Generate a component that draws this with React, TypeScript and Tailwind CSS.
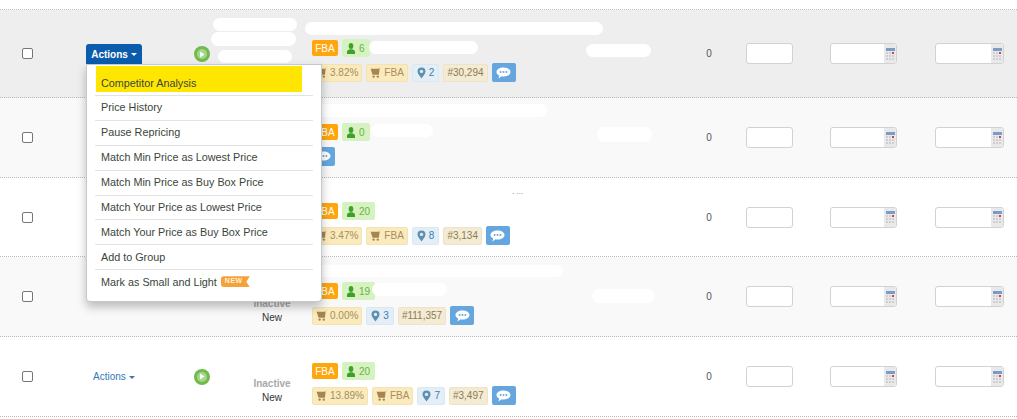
import React from "react";

const Cart = () => (
  <svg width="12" height="11" viewBox="0 0 12 11" className="shrink-0" aria-hidden="true">
    <path d="M11.8 0.3 L9.7 0.9 L8.9 7.8 L2.6 7.8 L0.6 1.8 L8.5 1.8 Z" fill="#a58550" />
    <circle cx="3.6" cy="9.6" r="1.2" fill="#a58550" />
    <circle cx="7.8" cy="9.6" r="1.2" fill="#a58550" />
  </svg>
);

const Pin = () => (
  <svg width="9" height="12" viewBox="0 0 9 12" className="shrink-0" aria-hidden="true">
    <path d="M4.5 11.5 C3 8.8 0.5 6.8 0.5 4.4 A4 4 0 0 1 8.5 4.4 C8.5 6.8 6 8.8 4.5 11.5 Z" fill="#5f8fae" />
    <circle cx="4.5" cy="4.4" r="1.7" fill="#dfebf3" />
  </svg>
);

const Person = () => (
  <svg width="8" height="11" viewBox="0 0 8 11" className="shrink-0" aria-hidden="true">
    <ellipse cx="4" cy="3" rx="2.3" ry="3" fill="#3fa12c" />
    <path d="M0 11 L0 8.6 C0 7.2 1.6 6.8 2.6 6.2 L5.4 6.2 C6.4 6.8 8 7.2 8 8.6 L8 11 Z" fill="#3fa12c" />
  </svg>
);

const Chat = () => (
  <svg width="15" height="12" viewBox="0 0 15 12" aria-hidden="true">
    <path d="M7.5 0.5 C11.4 0.5 14.5 2.4 14.5 5 C14.5 7.6 11.4 9.5 7.5 9.5 C6.8 9.5 6.2 9.4 5.6 9.3 L2.4 11.5 L3.2 8.5 C1.4 7.7 0.5 6.4 0.5 5 C0.5 2.4 3.6 0.5 7.5 0.5 Z" fill="#ffffff" />
    <circle cx="4.6" cy="5" r="1" fill="#65a6df" />
    <circle cx="7.5" cy="5" r="1" fill="#65a6df" />
    <circle cx="10.4" cy="5" r="1" fill="#65a6df" />
  </svg>
);

const Play = () => (
  <div className="flex h-4 w-4 items-center justify-center rounded-full bg-[#72bb4b]">
    <div className="flex h-[10px] w-[10px] items-center justify-center rounded-full bg-[#a6d68d]">
      <svg width="6" height="7" viewBox="0 0 6 7" aria-hidden="true">
        <path d="M1 0.5 L5.5 3.5 L1 6.5 Z" fill="#ffffff" />
      </svg>
    </div>
  </div>
);

const Calendar = () => (
  <div className="flex w-[9px] flex-col gap-px" aria-hidden="true">
    <div className="h-[3px] bg-[#7c9cc8]" />
    <div className="grid grid-cols-3 gap-px">
      {["#cfcfcf", "#cfcfcf", "#d0405a", "#cfcfcf", "#cfcfcf", "#cfcfcf", "#cfcfcf", "#cfcfcf", "#cfcfcf"].map((c, i) => (
        <div key={i} className="h-[2px]" style={{ backgroundColor: c }} />
      ))}
    </div>
  </div>
);

const Tan = ({ children }: { children: React.ReactNode }) => (
  <span className="flex h-[18px] items-center gap-[2px] rounded-[2px] border border-[#f3e2b6] bg-[#fbeabc] px-[3px] text-[#a58f62]">
    {children}
  </span>
);

const Rank = ({ children }: { children: React.ReactNode }) => (
  <span className="flex h-[18px] items-center rounded-[2px] border border-[#ece3c8] bg-[#f3ebd3] px-[3px] text-[#8f7b52]">{children}</span>
);

const Loc = ({ children }: { children: React.ReactNode }) => (
  <span className="flex h-[18px] items-center gap-[3px] rounded-[2px] border border-[#dbe8f1] bg-[#e3eef6] px-[4px] text-[#3a81b5]">
    <Pin />
    {children}
  </span>
);

const ChatBtn = () => (
  <span className="flex h-[19px] w-[24px] items-center justify-center rounded-[2px] bg-[#65a6df]">
    <Chat />
  </span>
);

const Blob = ({ c }: { c: string }) => <div className={`absolute rounded-full bg-white ${c}`} />;

const Field = ({ w }: { w: string }) => (
  <div className={`flex h-[21px] overflow-hidden rounded-[3px] border border-[#cfd3d8] bg-white ${w}`}>
    <div className="flex-1" />
    <div className="flex w-[12px] items-center justify-center bg-[#e9e9ea]">
      <Calendar />
    </div>
  </div>
);

type RowProps = {
  h: string;
  bg: string;
  count: string;
  status?: boolean;
  actions?: boolean;
  play?: boolean;
  pad?: string;
  bottom: React.ReactNode;
  children?: React.ReactNode;
};

const Row = ({ h, bg, count, status, actions, play, pad = "pt-[14px]", bottom, children }: RowProps) => (
  <div className={`relative flex items-center border-b border-dotted border-[#bbbbbb] ${h} ${bg}`}>
    <div className="flex w-[55px] justify-center">
      <div className="h-[11px] w-[11px] rounded-[2px] border border-[#767676] bg-white" />
    </div>
    <div className="flex w-[117px] justify-start pl-[38px]">
      {actions && (
        <span className="flex items-center gap-[3px] text-[#337ab7]">
          Actions
          <span className="mt-px h-0 w-0 border-x-[3.5px] border-t-[3.5px] border-x-transparent border-t-[#337ab7]" />
        </span>
      )}
    </div>
    <div className="flex w-[41px] justify-start pl-[22px]">{play && <Play />}</div>
    <div className="w-[99px]" />
    <div className={`flex flex-1 flex-col gap-[6px] ${pad}`}>
      <div className="flex items-center gap-[4px]">
        <span className="flex h-4 w-[26px] items-center justify-center rounded-[2px] bg-[#ffa60d] text-white">FBA</span>
        <span className="flex h-[18px] items-center gap-[4px] rounded-[2px] bg-[#d5f2c0] pl-[5px] pr-[5px] text-[#6db33f]">
          <Person />
          {count}
        </span>
      </div>
      <div className="flex items-center gap-[4px]">{bottom}</div>
    </div>
    <div className="flex w-[40px] justify-center pr-[4px]">0</div>
    <div className="w-[15px]" />
    <div className="flex h-[21px] w-[47px] rounded-[3px] border border-[#cfd3d8] bg-white" />
    <div className="w-[37px]" />
    <Field w="w-[67px]" />
    <div className="w-[38px]" />
    <Field w="w-[69px]" />
    <div className="w-[13px]" />
    {status && (
      <div className="absolute left-[253px] top-[40px] flex w-[38px] flex-col items-center leading-[14px]">
        <span className="font-bold text-[#a9a9a9]">Inactive</span>
        <span className="text-[#333333]">New</span>
      </div>
    )}
    {children}
  </div>
);

const items = [
  "Price History",
  "Pause Repricing",
  "Match Min Price as Lowest Price",
  "Match Min Price as Buy Box Price",
  "Match Your Price as Lowest Price",
  "Match Your Price as Buy Box Price",
  "Add to Group",
];

const Menu = () => (
  <div className="absolute left-[86px] top-[64px] z-10 w-[236px] rounded-b-[4px] border border-[#c4c9cc] bg-white px-[8px] pb-[7px] pt-[1px] text-[10.8px] text-[#3a453a] shadow-[0_5px_10px_rgba(0,0,0,0.25)]">
    <div className="ml-[1px] mr-[11px] flex h-[26px] items-end bg-[#ffe600] pb-[1px] pl-[5px]">Competitor Analysis</div>
    <div className="mt-[3px] border-b border-[#e3e3e3]" />
    {items.map((t) => (
      <div key={t} className="flex h-[24.9px] items-center border-b border-[#e3e3e3] pb-[1px] pl-[6px]">
        {t}
      </div>
    ))}
    <div className="flex h-[24px] items-center gap-[4px] pb-[1px] pl-[6px]">
      Mark as Small and Light
      <span className="flex h-[11px] w-[29px] items-center rounded-l-[3px] bg-[#f7a13a] pl-[4px] text-[7px] font-bold tracking-[0.5px] text-[#fff3d6] [clip-path:polygon(0_0,100%_0,88%_50%,100%_100%,0_100%)]">
        NEW
      </span>
    </div>
  </div>
);

export default function App() {
  return (
    <div className="relative h-[419px] w-[1017px] overflow-hidden bg-white pt-[9px] text-[10px] text-[#555555] [font-family:'Liberation_Sans',Arial,sans-serif]">
      <div className="border-t border-dotted border-[#bbbbbb]">
        <Row
          h="h-[88px]"
          bg="bg-[#eeeeee]"
          count="6"
          bottom={
            <>
              <Tan><Cart />3.82%</Tan>
              <Tan><Cart />FBA</Tan>
              <Loc>2</Loc>
              <Rank>#30,294</Rank>
              <ChatBtn />
            </>
          }
        >
          <span className="absolute left-[86px] top-[34px] flex h-[20px] w-[56px] items-center justify-center gap-[3px] rounded-t-[3px] bg-[#0b5cad] font-bold text-white">
            Actions
            <span className="mt-px h-0 w-0 border-x-[3.5px] border-t-[3.5px] border-x-transparent border-t-white" />
          </span>
          <div className="absolute left-[194px] top-[36px]"><Play /></div>
          <Blob c="left-[213px] top-[8px] h-[13px] w-[84px]" />
          <Blob c="left-[211px] top-[22px] h-[14px] w-[85px]" />
          <Blob c="left-[218px] top-[40px] h-[13px] w-[74px]" />
          <Blob c="left-[305px] top-[12px] h-[13px] w-[298px]" />
          <Blob c="left-[369px] top-[31px] h-[13px] w-[109px]" />
          <Blob c="left-[586px] top-[34px] h-[13px] w-[65px]" />
        </Row>
        <Row
          h="h-[80px]"
          bg="bg-[#f9f9f9]"
          count="0"
          bottom={
            <span className="-ml-[1px]">
              <ChatBtn />
            </span>
          }
        >
          <Blob c="left-[305px] top-[6px] h-[13px] w-[242px]" />
          <Blob c="left-[371px] top-[26px] h-[13px] w-[62px]" />
          <Blob c="left-[597px] top-[29px] h-[15px] w-[55px]" />
        </Row>
        <Row
          h="h-[79px]"
          bg="bg-white"
          count="20"
          pad="pt-[13px]"
          bottom={
            <>
              <Tan><Cart />3.47%</Tan>
              <Tan><Cart />FBA</Tan>
              <Loc>8</Loc>
              <Rank>#3,134</Rank>
              <ChatBtn />
            </>
          }
        >
          <span className="absolute left-[512px] top-[10px] text-[8px] leading-none text-[#777777]">. ...</span>
        </Row>
        <Row
          h="h-[80px]"
          bg="bg-[#f9f9f9]"
          count="19"
          status
          bottom={
            <>
              <Tan><Cart />0.00%</Tan>
              <Loc>3</Loc>
              <Rank>#111,357</Rank>
              <ChatBtn />
            </>
          }
        >
          <Blob c="left-[305px] top-[8px] h-[12px] w-[258px]" />
          <Blob c="left-[372px] top-[26px] h-[13px] w-[75px]" />
          <Blob c="left-[592px] top-[32px] h-[14px] w-[63px]" />
        </Row>
        <Row
          h="h-[80px]"
          bg="bg-white"
          count="20"
          actions
          play
          status
          bottom={
            <>
              <Tan><Cart />13.89%</Tan>
              <Tan><Cart />FBA</Tan>
              <Loc>7</Loc>
              <Rank>#3,497</Rank>
              <ChatBtn />
            </>
          }
        />
      </div>
      <Menu />
    </div>
  );
}
